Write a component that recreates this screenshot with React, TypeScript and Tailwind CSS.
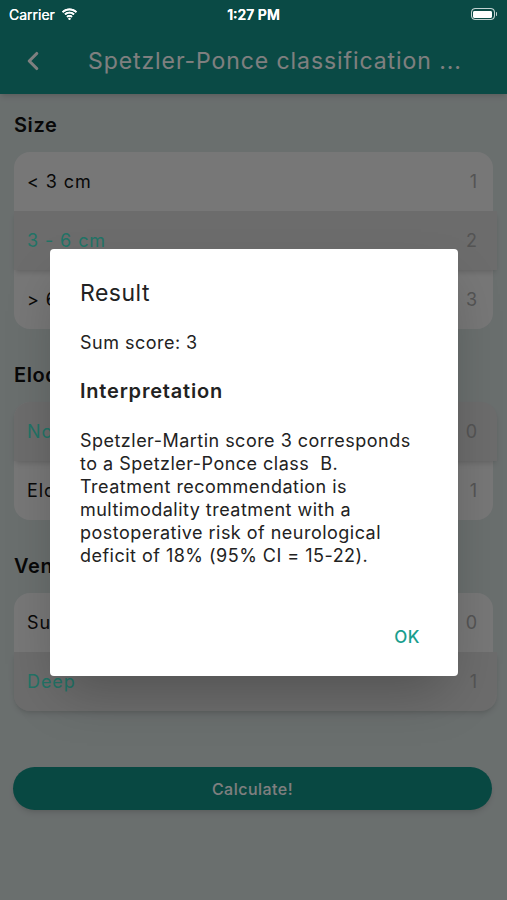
import React from 'react';
import { ChevronLeft } from 'lucide-react';

type Option = { label: string; points: number };
type Section = { title: string; options: Option[]; selected: number };

const sections: Section[] = [
  {
    title: 'Size',
    selected: 1,
    options: [
      { label: '< 3 cm', points: 1 },
      { label: '3 - 6 cm', points: 2 },
      { label: '> 6 cm', points: 3 },
    ],
  },
  {
    title: 'Eloquence',
    selected: 0,
    options: [
      { label: 'Non-eloquent', points: 0 },
      { label: 'Eloquent', points: 1 },
    ],
  },
  {
    title: 'Venous drainage',
    selected: 1,
    options: [
      { label: 'Superficial', points: 0 },
      { label: 'Deep', points: 1 },
    ],
  },
];

const resultLines = [
  'Spetzler-Martin score 3 corresponds',
  'to a Spetzler-Ponce class\u00a0 B.',
  'Treatment recommendation is',
  'multimodality treatment with a',
  'postoperative risk of neurological',
  'deficit of 18% (95% CI = 15-22).',
];

function StatusBar() {
  return (
    <div className="relative z-20 h-7 flex items-center justify-between px-[9px] text-white text-[14px]">
      <div className="flex items-center gap-1.5 w-[120px]">
        <span>Carrier</span>
        <svg width="17" height="12" viewBox="0 0 17 12" fill="white">
          <path d="M8.5 2.2c2.4 0 4.6.9 6.3 2.5l1.2-1.2C14 1.6 11.4.5 8.5.5S3 1.6 1 3.5l1.2 1.2C3.9 3.1 6.1 2.2 8.5 2.2z" />
          <path d="M8.5 5.5c1.5 0 2.9.6 3.9 1.5l1.2-1.2C12.3 4.6 10.5 3.8 8.5 3.8S4.7 4.6 3.4 5.8L4.6 7c1-.9 2.4-1.5 3.9-1.5z" />
          <path d="M8.5 8.7c.7 0 1.3.3 1.8.7l1.2-1.2C10.7 7.5 9.7 7 8.5 7s-2.2.5-3 1.2l1.2 1.2c.5-.4 1.1-.7 1.8-.7z" />
          <circle cx="8.5" cy="10.8" r="1.1" />
        </svg>
      </div>
      <span className="font-semibold">1:27 PM</span>
      <div className="w-[120px] flex justify-end pr-[1px]">
        <div className="flex items-center">
          <div className="w-[24px] h-[12px] rounded-[4px] border border-white/50 p-[1.5px]">
            <div className="w-full h-full bg-white rounded-[2px]" />
          </div>
          <div className="w-[1.5px] h-[4px] bg-white/50 rounded-r-sm ml-[1px]" />
        </div>
      </div>
    </div>
  );
}

function OptionCard({ section }: { section: Section }) {
  return (
    <div className="rounded-2xl bg-[#efefef]">
      {section.options.map((opt, i) => {
        const active = i === section.selected;
        return (
          <div
            key={opt.label}
            className={
              active
                ? 'h-[59px] -mr-1 flex items-center justify-between pl-[13px] pr-[19px] bg-[#d8d8d8] shadow-md text-[18px] tracking-[0.05em] text-[#44e6cc] first:rounded-t-2xl last:rounded-b-2xl'
                : 'h-[59px] flex items-center justify-between pl-[13px] pr-[15px] text-[18px] tracking-[0.05em] text-[#111] first:rounded-t-2xl last:rounded-b-2xl'
            }
          >
            <span>{opt.label}</span>
            <span className="text-[#a8a8a8]">{opt.points}</span>
          </div>
        );
      })}
    </div>
  );
}

export default function App() {
  return (
    <div className="relative h-[900px] w-full overflow-hidden bg-[#d5dedd] font-['Inter','Liberation_Sans',sans-serif]">
      <div className="bg-[#14948a] shadow-md">
        <StatusBar />
        <div className="h-[66px] flex items-center pl-[18px] pr-4 text-white">
          <ChevronLeft size={30} strokeWidth={2.5} />
          <div className="ml-[40px] text-[23px] tracking-[0.04em] whitespace-nowrap overflow-hidden">Spetzler-Ponce classification ...</div>
        </div>
      </div>

      <div className="px-[14px] pt-[18px]">
        {sections.map(section => (
          <div key={section.title} className="mb-[33px]">
            <div className="text-[20px] font-semibold tracking-[0.03em] text-[#111] leading-[26px] mb-[14px]">{section.title}</div>
            <OptionCard section={section} />
          </div>
        ))}
        <button className="mt-[23px] w-full h-[43px] rounded-full bg-[#109085] text-white text-[16px] tracking-[0.03em] font-medium -ml-px shadow-md">
          Calculate!
        </button>
      </div>

      <div className="absolute inset-0 z-10 bg-black/50" />

      <div className="absolute z-20 left-[50px] top-[249px] w-[408px] h-[427px] bg-white rounded-[4px] shadow-2xl flex flex-col pl-[30px] pr-[30px] pt-[30px] text-[#222] tracking-[0.03em]">
        <div className="text-[23px] leading-[28px]">Result</div>
        <div className="mt-[25px] text-[18px] leading-[22px]">Sum score: 3</div>
        <div className="mt-[24px] text-[20px] leading-[26px] font-semibold tracking-[0.04em]">Interpretation</div>
        <p className="mt-[25px] text-[18px] leading-[23px] whitespace-nowrap">
          {resultLines.map((line, i) => (
            <React.Fragment key={i}>
              {line}
              {i < resultLines.length - 1 && <br />}
            </React.Fragment>
          ))}
        </p>
        <div className="mt-auto mb-[28px] pr-[8px] flex justify-end">
          <span className="text-[17px] leading-[22px] text-[#1a9e8e] font-medium">OK</span>
        </div>
      </div>

      <div className="absolute z-20 top-0 left-0 right-0">
        <StatusBar />
      </div>
    </div>
  );
}
